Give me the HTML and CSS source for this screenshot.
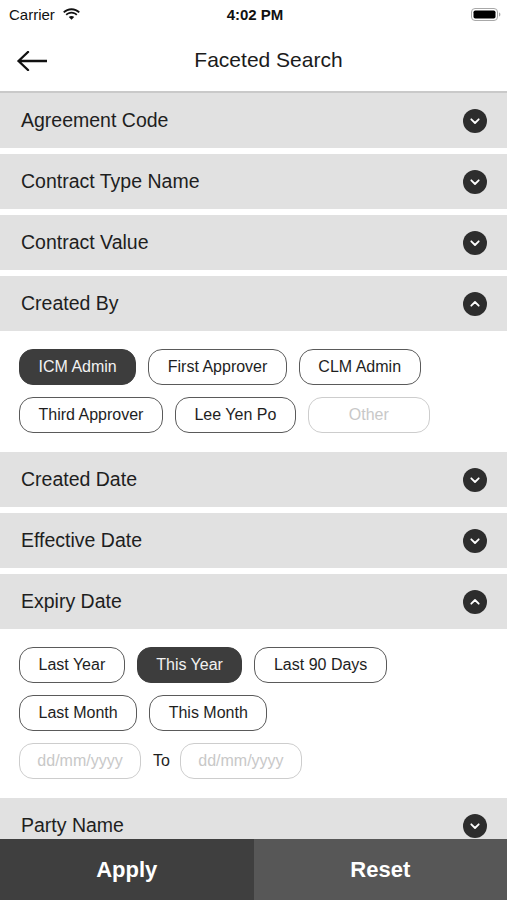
FILE: index.html
```html
<!DOCTYPE html>
<html lang="en">
<head>
<meta charset="utf-8">
<title>Faceted Search</title>
<link rel="stylesheet" href="styles.css">
</head>
<body>
<div class="screen">
  <div class="status">
    <div class="status-left">
      <span>Carrier</span>
      <svg class="wifi" width="17" height="12" viewBox="0 0 17 12"><path d="M8.5 2.2C11.3 2.2 13.8 3.3 15.6 5.1L16.9 3.8C14.7 1.6 11.8 0.3 8.5 0.3C5.2 0.3 2.3 1.6 0.1 3.8L1.4 5.1C3.2 3.3 5.7 2.2 8.5 2.2Z"/><path d="M8.5 5.6C10.3 5.6 11.9 6.3 13.1 7.5L14.4 6.2C12.9 4.7 10.8 3.8 8.5 3.8C6.2 3.8 4.1 4.7 2.6 6.2L3.9 7.5C5.1 6.3 6.7 5.6 8.5 5.6Z"/><path d="M8.5 11.7L11.2 9C10.5 8.3 9.6 7.9 8.5 7.9C7.4 7.9 6.5 8.3 5.8 9Z"/></svg>
    </div>
    <div class="status-time">4:02 PM</div>
    <div class="status-right">
      <svg width="30" height="13" viewBox="0 0 30 13"><rect x="0.5" y="0.5" width="26" height="12" rx="3.5" fill="none" stroke="#a8a8a8"/><rect x="2.5" y="2.5" width="22" height="8" rx="1.8" fill="#000"/><path d="M28 4.5v4c0.9-0.3 1.4-1.1 1.4-2s-0.5-1.7-1.4-2z" fill="#a8a8a8"/></svg>
    </div>
  </div>

  <div class="nav">
    <svg class="back" width="30" height="20" viewBox="0 0 30 20"><path d="M1.5 10H30M11 1L1.5 10L11 19" fill="none" stroke="#111" stroke-width="2.4" stroke-linecap="round" stroke-linejoin="round"/></svg>
    <div class="title">Faceted Search</div>
  </div>

  <div class="list">
    <div class="section">
      <div class="head"><span>Agreement Code</span><svg class="chev" width="24" height="24" viewBox="0 0 24 24"><circle cx="12" cy="12" r="12"/><path d="M8.3 10.3L12 14L15.7 10.3"/></svg></div>
    </div>
    <div class="section">
      <div class="head"><span>Contract Type Name</span><svg class="chev" width="24" height="24" viewBox="0 0 24 24"><circle cx="12" cy="12" r="12"/><path d="M8.3 10.3L12 14L15.7 10.3"/></svg></div>
    </div>
    <div class="section">
      <div class="head"><span>Contract Value</span><svg class="chev" width="24" height="24" viewBox="0 0 24 24"><circle cx="12" cy="12" r="12"/><path d="M8.3 10.3L12 14L15.7 10.3"/></svg></div>
    </div>
    <div class="section">
      <div class="head"><span>Created By</span><svg class="chev" width="24" height="24" viewBox="0 0 24 24"><circle cx="12" cy="12" r="12"/><path d="M8.3 13.7L12 10L15.7 13.7"/></svg></div>
      <div class="body">
        <div class="chips">
          <span class="chip on">ICM Admin</span>
          <span class="chip">First Approver</span>
          <span class="chip">CLM Admin</span>
          <span class="chip">Third Approver</span>
          <span class="chip">Lee Yen Po</span>
          <span class="chip ghost">Other</span>
        </div>
      </div>
    </div>
    <div class="section">
      <div class="head"><span>Created Date</span><svg class="chev" width="24" height="24" viewBox="0 0 24 24"><circle cx="12" cy="12" r="12"/><path d="M8.3 10.3L12 14L15.7 10.3"/></svg></div>
    </div>
    <div class="section">
      <div class="head"><span>Effective Date</span><svg class="chev" width="24" height="24" viewBox="0 0 24 24"><circle cx="12" cy="12" r="12"/><path d="M8.3 10.3L12 14L15.7 10.3"/></svg></div>
    </div>
    <div class="section">
      <div class="head"><span>Expiry Date</span><svg class="chev" width="24" height="24" viewBox="0 0 24 24"><circle cx="12" cy="12" r="12"/><path d="M8.3 13.7L12 10L15.7 13.7"/></svg></div>
      <div class="body">
        <div class="chips">
          <span class="chip">Last Year</span>
          <span class="chip on">This Year</span>
          <span class="chip">Last 90 Days</span>
          <span class="chip">Last Month</span>
          <span class="chip">This Month</span>
          <div class="range">
            <span class="chip ghost">dd/mm/yyyy</span>
            <span class="to">To</span>
            <span class="chip ghost">dd/mm/yyyy</span>
          </div>
        </div>
      </div>
    </div>
    <div class="section">
      <div class="head"><span>Party Name</span><svg class="chev" width="24" height="24" viewBox="0 0 24 24"><circle cx="12" cy="12" r="12"/><path d="M8.3 10.3L12 14L15.7 10.3"/></svg></div>
    </div>
  </div>

  <div class="actions">
    <div class="btn apply">Apply</div>
    <div class="btn reset">Reset</div>
  </div>
</div>
</body>
</html>
```
FILE: styles.css
```css
* { box-sizing: border-box; }
html, body { margin: 0; padding: 0; }
body {
  font-family: "Liberation Sans", Arial, sans-serif;
  color: #1d1d1d;
  background: #fff;
}
.screen {
  position: relative;
  width: 507px;
  height: 900px;
  overflow: hidden;
  background: #fff;
}
.status {
  height: 28px;
  display: flex;
  align-items: center;
  justify-content: space-between;
  padding: 0 6px 0 9px;
  font-size: 15px;
  color: #111;
}
.status-left { display: flex; align-items: center; gap: 8px; width: 120px; }
.wifi { fill: #111; margin-top: -1px; }
.status-time { font-weight: bold; font-size: 15px; }
.status-right { width: 120px; display: flex; justify-content: flex-end; }
.nav {
  height: 65px;
  display: flex;
  align-items: center;
  padding: 0 17px;
  border-bottom: 2px solid #c9c9c9;
}
.back { flex: none; margin-top: 2px; }
.title {
  flex: 1;
  text-align: center;
  font-size: 21px;
  color: #1b1b1b;
  margin-top: 1px;
}
.list { display: flex; flex-direction: column; }
.section { margin-bottom: 6px; }
.head {
  height: 55px;
  background: #e1e1e1;
  display: flex;
  align-items: center;
  justify-content: space-between;
  padding: 0 20px 0 21px;
  font-size: 19.5px;
  color: #1e1e1e;
}
.chev circle { fill: #2d2d2d; }
.chev path { fill: none; stroke: #fff; stroke-width: 1.8; stroke-linecap: round; stroke-linejoin: round; }
.body { padding: 18px 19px 13px; background: #fff; }
.chips {
  display: flex;
  flex-wrap: wrap;
  gap: 12px 12px;
}
.chip {
  height: 36px;
  padding: 0 18.5px;
  border: 1.3px solid #5a5a5a;
  border-radius: 14px;
  display: inline-flex;
  align-items: center;
  justify-content: center;
  font-size: 16px;
  color: #1e1e1e;
  white-space: nowrap;
}
.chip.on {
  background: #3d3d3d;
  border-color: #3d3d3d;
  color: #f2f2f2;
}
.chip.ghost {
  width: 122px;
  padding: 0;
  border-color: #cdcdcd;
  color: #c8c8c8;
}
.range {
  display: flex;
  align-items: center;
  gap: 12px;
}
.to { font-size: 16px; color: #1e1e1e; margin-right: -2px; }
.actions {
  position: absolute;
  left: 0;
  right: 0;
  bottom: 0;
  height: 61px;
  display: flex;
}
.btn {
  flex: 1;
  display: flex;
  align-items: center;
  justify-content: center;
  color: #fff;
  font-weight: bold;
  font-size: 22px;
}
.apply { background: #3f3f3f; }
.reset { background: #575757; }
```
